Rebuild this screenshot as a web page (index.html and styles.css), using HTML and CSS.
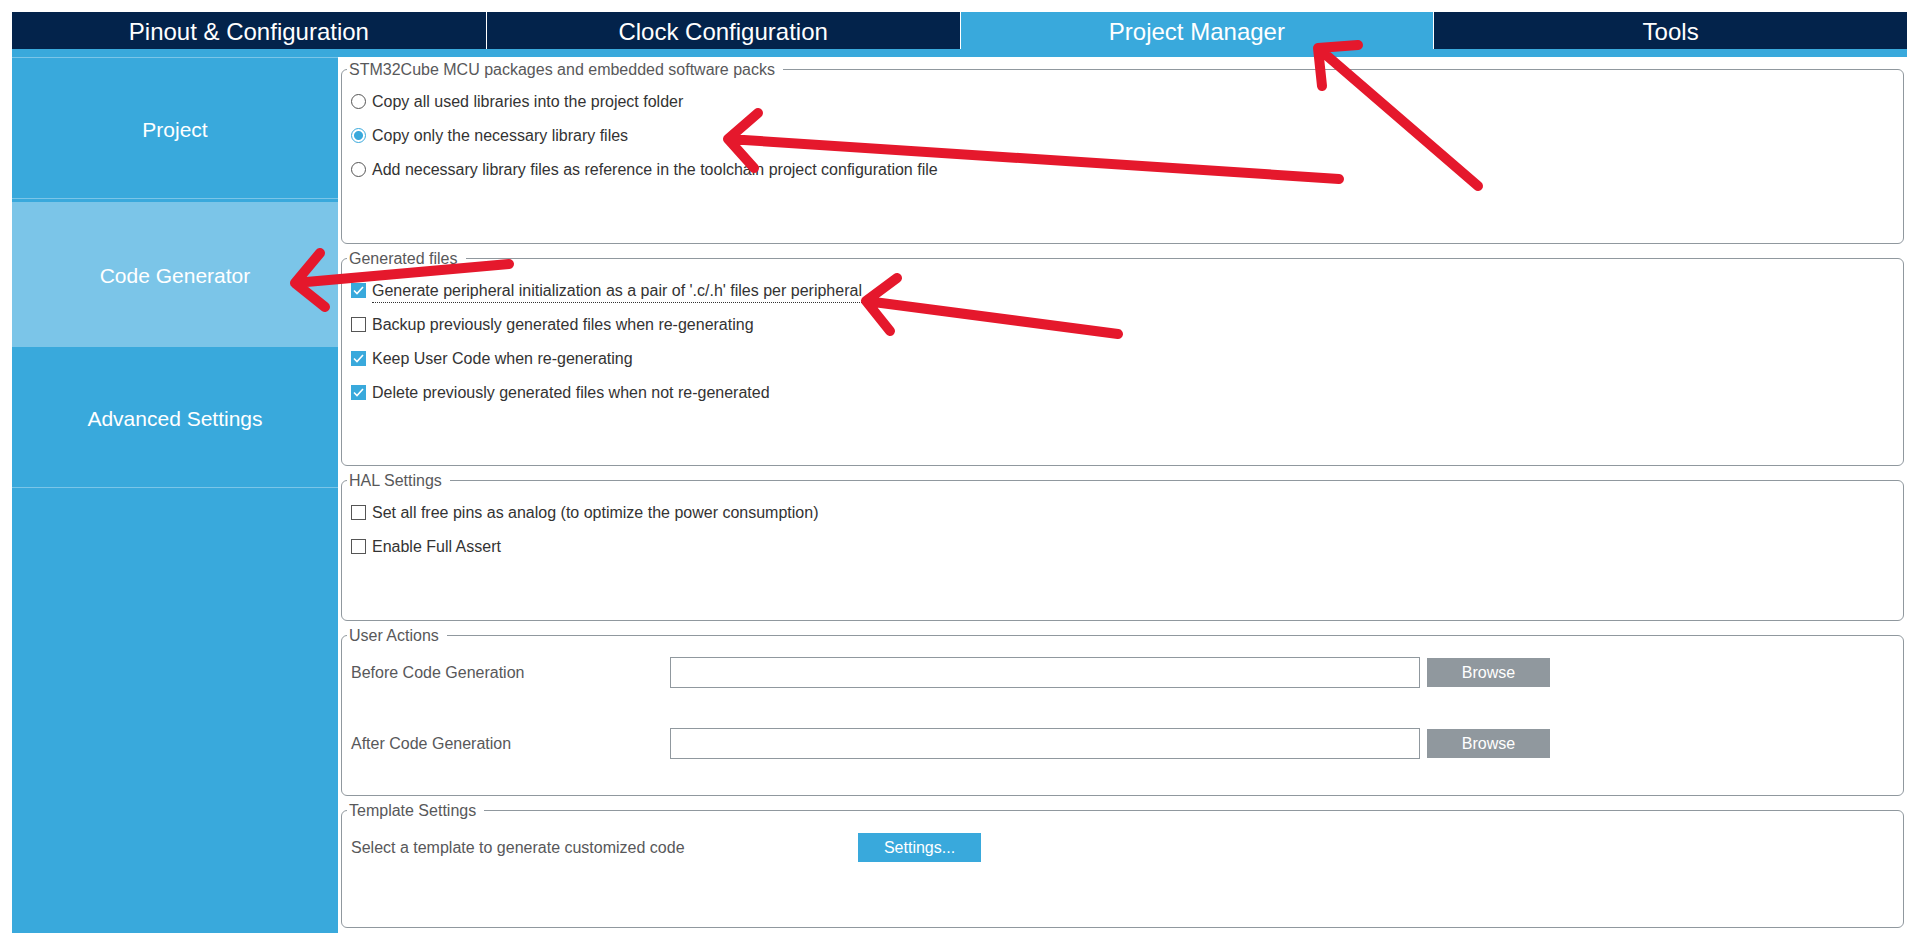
FILE: index.html
```html
<!DOCTYPE html>
<html lang="en">
<head>
<meta charset="utf-8">
<title>Project Manager</title>
<link rel="stylesheet" href="styles.css">
</head>
<body>
<div class="app">
  <nav class="tabs">
    <button class="tab" type="button">Pinout &amp; Configuration</button>
    <button class="tab" type="button">Clock Configuration</button>
    <button class="tab tab-active" type="button">Project Manager</button>
    <button class="tab" type="button">Tools</button>
  </nav>
  <div class="body">
    <nav class="sidebar">
      <button class="side-item" type="button">Project</button>
      <button class="side-item side-active" type="button">Code Generator</button>
      <button class="side-item" type="button">Advanced Settings</button>
    </nav>
    <main class="panels">
      <fieldset class="group">
        <legend>STM32Cube MCU packages and embedded software packs</legend>
        <label class="option"><input type="radio" name="copy"><span>Copy all used libraries into the project folder</span></label>
        <label class="option"><input type="radio" name="copy" checked><span>Copy only the necessary library files</span></label>
        <label class="option"><input type="radio" name="copy"><span>Add necessary library files as reference in the toolchain project configuration file</span></label>
      </fieldset>
      <fieldset class="group">
        <legend>Generated files</legend>
        <label class="option"><input type="checkbox" checked><span class="focused">Generate peripheral initialization as a pair of '.c/.h' files per peripheral</span></label>
        <label class="option"><input type="checkbox"><span>Backup previously generated files when re-generating</span></label>
        <label class="option"><input type="checkbox" checked><span>Keep User Code when re-generating</span></label>
        <label class="option"><input type="checkbox" checked><span>Delete previously generated files when not re-generated</span></label>
      </fieldset>
      <fieldset class="group">
        <legend>HAL Settings</legend>
        <label class="option"><input type="checkbox"><span>Set all free pins as analog (to optimize the power consumption)</span></label>
        <label class="option"><input type="checkbox"><span>Enable Full Assert</span></label>
      </fieldset>
      <fieldset class="group group-form">
        <legend>User Actions</legend>
        <div class="action">
          <label class="action-label" for="before">Before Code Generation</label>
          <input class="path" id="before" type="text">
          <button class="btn" type="button">Browse</button>
        </div>
        <div class="action">
          <label class="action-label" for="after">After Code Generation</label>
          <input class="path" id="after" type="text">
          <button class="btn" type="button">Browse</button>
        </div>
      </fieldset>
      <fieldset class="group group-form">
        <legend>Template Settings</legend>
        <div class="action">
          <span class="template-label">Select a template to generate customized code</span>
          <button class="btn btn-primary" type="button">Settings...</button>
        </div>
      </fieldset>
    </main>
  </div>
  <svg class="arrows" viewBox="0 0 1911 939" preserveAspectRatio="none" aria-hidden="true">
    <path d="M1358 45L1318 48L1322 86M1318 48L1478 186"/>
    <path d="M758 113L728 139L754 168M728 139L1339 179"/>
    <path d="M320 253L295 283L325 307M295 283L509 264"/>
    <path d="M897 278L866 301L890 331M866 301L1118 334"/>
  </svg>
</div>
</body>
</html>
```
FILE: styles.css
```css
* {
  box-sizing: border-box;
}

body {
  margin: 0;
  background: #fff;
  color: #333;
  font-family: "Liberation Sans", Arial, sans-serif;
  font-size: 16px;
}

button,
input {
  font: inherit;
}

.app {
  position: relative;
  display: flex;
  flex-direction: column;
  min-height: 100vh;
  padding: 12px 4px 6px 12px;
}

.tabs {
  display: grid;
  grid-template-columns: repeat(4, 1fr);
  border-bottom: 8px solid #39a9dc;
}

.tab {
  height: 37px;
  padding: 2px 0 0;
  border: 0;
  background: #03234b;
  color: #fff;
  font-size: 24px;
  line-height: 35px;
}

.tab + .tab {
  border-left: 1px solid #fff;
}

.tab-active {
  background: #39a9dc;
}

.body {
  flex: 1;
  display: flex;
}

.sidebar {
  flex: none;
  width: 326px;
  display: flex;
  flex-direction: column;
  background: #39a9dc;
  border-top: 1px solid #7bc5e8;
}

.side-item {
  height: 141px;
  padding: 3px 0 0;
  border: 0;
  border-bottom: 1px solid #7bc5e8;
  background: #39a9dc;
  color: #fff;
  font-size: 21px;
}

.side-active {
  height: 145px;
  margin-top: 3px;
  background: #7bc5e8;
}

.panels {
  flex: 1;
  display: grid;
  grid-template-rows: 185fr 218fr 151fr 171fr 128fr;
  gap: 4px;
  padding: 2px 3px 5px 3px;
}

.group {
  min-width: 0;
  margin: 0;
  padding: 5px 9px;
  border: 1px solid #90989e;
  border-radius: 6px;
}

.group legend {
  margin-left: -4px;
  padding: 2px 8px 0 2px;
  color: #58585a;
  line-height: 18px;
}

.option {
  display: flex;
  align-items: center;
  gap: 6px;
  width: fit-content;
  height: 34px;
}

.option span {
  padding-top: 1px;
  line-height: 23px;
}

.option .focused {
  border-bottom: 1px dotted #333;
}

.option input {
  appearance: none;
  flex: none;
  width: 15px;
  height: 15px;
  margin: 0;
  border: 1px solid #555;
  background: #fff;
}

.option input[type="radio"] {
  border-radius: 50%;
}

.option input[type="radio"]:checked {
  border-color: #39a9dc;
  background: radial-gradient(circle, #39a9dc 4px, #fff 5px);
}

.option input[type="checkbox"]:checked {
  border-color: #39a9dc;
  background: #39a9dc url("data:image/svg+xml,%3Csvg xmlns='http://www.w3.org/2000/svg' viewBox='0 0 13 13'%3E%3Cpath d='M2 6.500L5 9.500L11 3' fill='none' stroke='white' stroke-width='1.600'/%3E%3C/svg%3E") center / 13px 13px;
}

.group-form {
  display: flex;
  flex-direction: column;
  gap: 40px;
  padding-top: 12px;
  color: #58585a;
}

.action {
  display: flex;
  align-items: center;
  min-height: 31px;
}

.action-label {
  flex: none;
  width: 319px;
}

.path {
  flex: 0 1 750px;
  min-width: 0;
  height: 31px;
  margin-right: 7px;
  border: 1px solid #90989e;
  background: #fff;
}

.template-label {
  flex: none;
  width: 507px;
}

.btn {
  flex: none;
  width: 123px;
  height: 29px;
  padding: 0;
  border: 0;
  background: #90989e;
  color: #fff;
}

.btn-primary {
  background: #39a9dc;
}

.arrows {
  position: absolute;
  top: 0;
  left: 0;
  width: 100%;
  height: 100%;
  fill: none;
  stroke: #e5182c;
  stroke-width: 10;
  stroke-linecap: round;
  stroke-linejoin: round;
  pointer-events: none;
}
```
